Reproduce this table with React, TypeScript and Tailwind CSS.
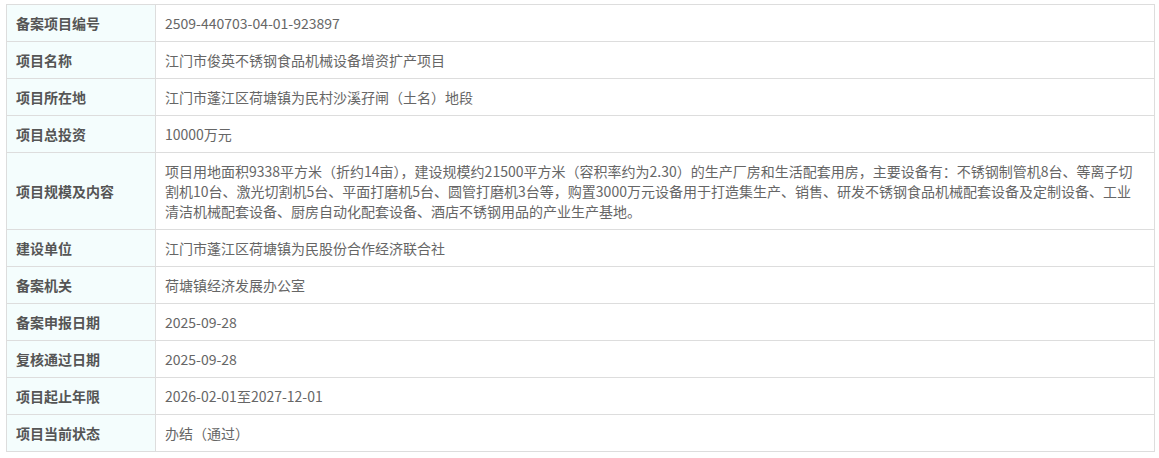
const rows: { label: string; value: React.ReactNode }[] = [
  { label: "备案项目编号", value: "2509-440703-04-01-923897" },
  { label: "项目名称", value: "江门市俊英不锈钢食品机械设备增资扩产项目" },
  { label: "项目所在地", value: "江门市蓬江区荷塘镇为民村沙溪孖闸（土名）地段" },
  { label: "项目总投资", value: "10000万元" },
  {
    label: "项目规模及内容",
    value: (
      <>
        项目用地面积9338平方米（折约14亩），建设规模约21500平方米（容积率约为2.30）的生产厂房和生活配套用房，主要设备有：不锈钢制管机8台、等离子切
        <br />
        割机10台、激光切割机5台、平面打磨机5台、圆管打磨机3台等，购置3000万元设备用于打造集生产、销售、研发不锈钢食品机械配套设备及定制设备、工业
        <br />
        清洁机械配套设备、厨房自动化配套设备、酒店不锈钢用品的产业生产基地。
      </>
    ),
  },
  { label: "建设单位", value: "江门市蓬江区荷塘镇为民股份合作经济联合社" },
  { label: "备案机关", value: "荷塘镇经济发展办公室" },
  { label: "备案申报日期", value: "2025-09-28" },
  { label: "复核通过日期", value: "2025-09-28" },
  { label: "项目起止年限", value: "2026-02-01至2027-12-01" },
  { label: "项目当前状态", value: "办结（通过）" },
];

export default function App() {
  return (
    <div className="min-h-[458px] bg-white pl-[6px] pt-[4px] font-['Microsoft_YaHei','Noto_Sans_CJK_SC',sans-serif] text-[14px] leading-[20px]">
      <table className="w-[1149px] table-fixed border-collapse">
        <tbody>
          {rows.map((row) => (
            <tr key={row.label}>
              <td className="w-[149px] border border-[#dddddd] bg-[#f4fdfd] px-[9px] py-[8px] font-bold text-[#555555]">
                {row.label}
              </td>
              <td className="border border-[#dddddd] px-[9px] py-[8px] text-[#666666] whitespace-nowrap">
                {row.value}
              </td>
            </tr>
          ))}
        </tbody>
      </table>
    </div>
  );
}
